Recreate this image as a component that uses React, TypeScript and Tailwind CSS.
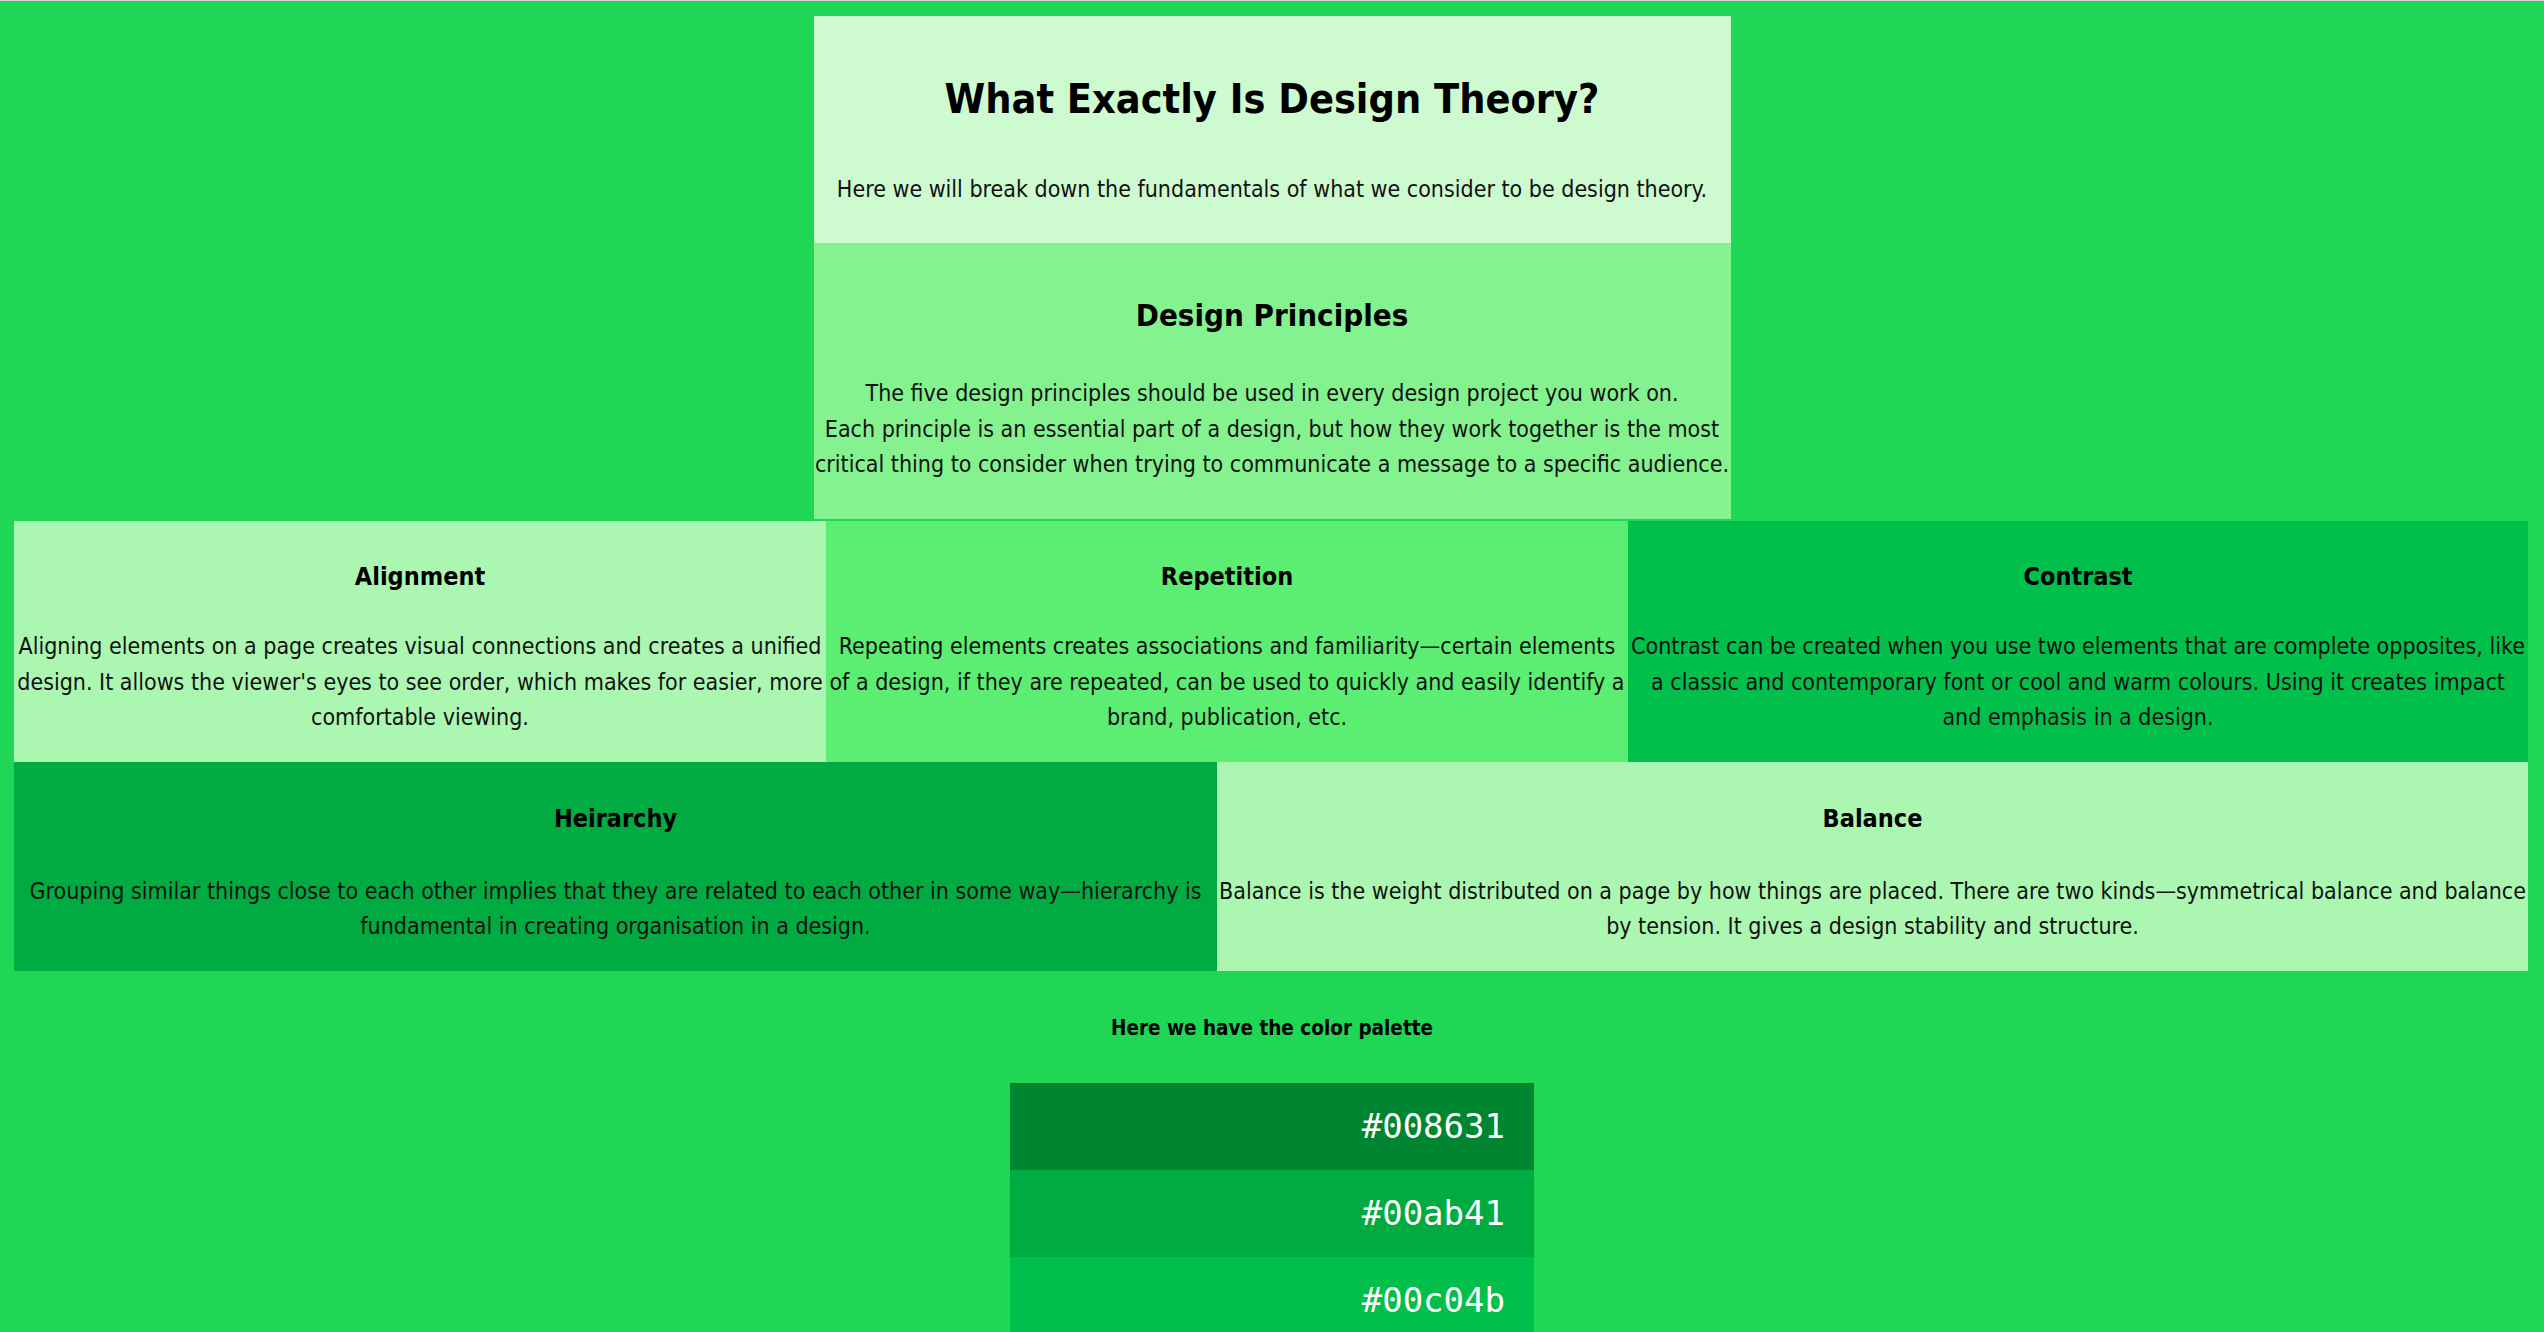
const font = "font-['DejaVu_Sans_Condensed','DejaVu_Sans',sans-serif]"

const palette = [
  { hex: '#008631', bg: 'bg-[#008631]' },
  { hex: '#00ab41', bg: 'bg-[#00ab41]' },
  { hex: '#00c04b', bg: 'bg-[#00c04b]' },
  { hex: '#1fd655', bg: 'bg-[#1fd655]' },
  { hex: '#39e75f', bg: 'bg-[#39e75f]' },
  { hex: '#5ced73', bg: 'bg-[#5ced73]' },
  { hex: '#83f28f', bg: 'bg-[#83f28f]' },
  { hex: '#abf7b1', bg: 'bg-[#abf7b1]' },
  { hex: '#cefad0', bg: 'bg-[#cefad0]' },
]

function Card({
  title,
  lines,
  bg,
  tall,
}: {
  title: string
  lines: string[]
  bg: string
  tall?: boolean
}) {
  return (
    <div
      className={`${bg} flex min-w-0 flex-col items-center pb-[26px] text-center ${tall ? 'pt-[39px]' : 'pt-[38px]'}`}
    >
      <h3 className="text-[25px] leading-[36px] font-bold text-black">{title}</h3>
      <p
        className={`text-[23px] leading-[35.5px] text-[#111] ${tall ? 'mt-[37px]' : 'mt-[34px]'}`}
      >
        {lines.map((l, i) => (
          <span key={i} className="block whitespace-nowrap">
            {l}
          </span>
        ))}
      </p>
    </div>
  )
}

export default function App() {
  return (
    <div className={`${font} min-h-screen border-t border-[#d4d4d4] bg-[#1fd655] pt-[15px] pb-10`}>
      {/* intro */}
      <div className="mx-auto w-[917px]">
        <div className="flex h-[227px] flex-col items-center bg-[#cefad0] pt-[50px] text-center">
          <h1 className="text-[41px] leading-[67px] font-bold text-black">
            What Exactly Is Design Theory?
          </h1>
          <p className="mt-[38px] text-[23px] leading-[36px] whitespace-nowrap text-[#111]">
            Here we will break down the fundamentals of what we consider to be design theory.
          </p>
        </div>
        <div className="flex h-[276px] flex-col items-center bg-[#83f28f] pt-[47px] text-center">
          <h2 className="text-[31px] leading-[50px] font-bold text-black">Design Principles</h2>
          <p className="mt-[36px] text-[23px] leading-[35.5px] text-[#111]">
            <span className="block whitespace-nowrap">
              The five design principles should be used in every design project you work on.
            </span>
            <span className="block whitespace-nowrap">
              Each principle is an essential part of a design, but how they work together is the most
            </span>
            <span className="block whitespace-nowrap">
              critical thing to consider when trying to communicate a message to a specific audience.
            </span>
          </p>
        </div>
      </div>

      {/* principles */}
      <div className="mt-[2px] ml-[14px] mr-[16px]">
        <div className="grid grid-cols-[812px_802px_minmax(0,1fr)]">
          <Card
            title="Alignment"
            bg="bg-[#abf7b1]"
            lines={[
              'Aligning elements on a page creates visual connections and creates a unified',
              "design. It allows the viewer's eyes to see order, which makes for easier, more",
              'comfortable viewing.',
            ]}
          />
          <Card
            title="Repetition"
            bg="bg-[#5ced73]"
            lines={[
              'Repeating elements creates associations and familiarity\u2014certain elements',
              'of a design, if they are repeated, can be used to quickly and easily identify a',
              'brand, publication, etc.',
            ]}
          />
          <Card
            title="Contrast"
            bg="bg-[#00c04b]"
            lines={[
              'Contrast can be created when you use two elements that are complete opposites, like',
              'a classic and contemporary font or cool and warm colours. Using it creates impact',
              'and emphasis in a design.',
            ]}
          />
        </div>
        <div className="grid grid-cols-[1203px_minmax(0,1fr)]">
          <Card
            tall
            title="Heirarchy"
            bg="bg-[#00ab41]"
            lines={[
              'Grouping similar things close to each other implies that they are related to each other in some way\u2014hierarchy is',
              'fundamental in creating organisation in a design.',
            ]}
          />
          <Card
            tall
            title="Balance"
            bg="bg-[#abf7b1]"
            lines={[
              'Balance is the weight distributed on a page by how things are placed. There are two kinds\u2014symmetrical balance and balance',
              'by tension. It gives a design stability and structure.',
            ]}
          />
        </div>
      </div>

      {/* palette */}
      <p className="mt-[41px] text-center text-[20.5px] leading-[32px] font-bold text-black">
        Here we have the color palette
      </p>
      <div className="mx-auto mt-[39px] w-[524px]">
        {palette.map((c) => (
          <div
            key={c.hex}
            className={`${c.bg} flex h-[87px] items-center justify-end pr-[29px] font-['DejaVu_Sans_Mono',monospace] text-[34px] text-white`}
          >
            {c.hex}
          </div>
        ))}
      </div>
    </div>
  )
}
